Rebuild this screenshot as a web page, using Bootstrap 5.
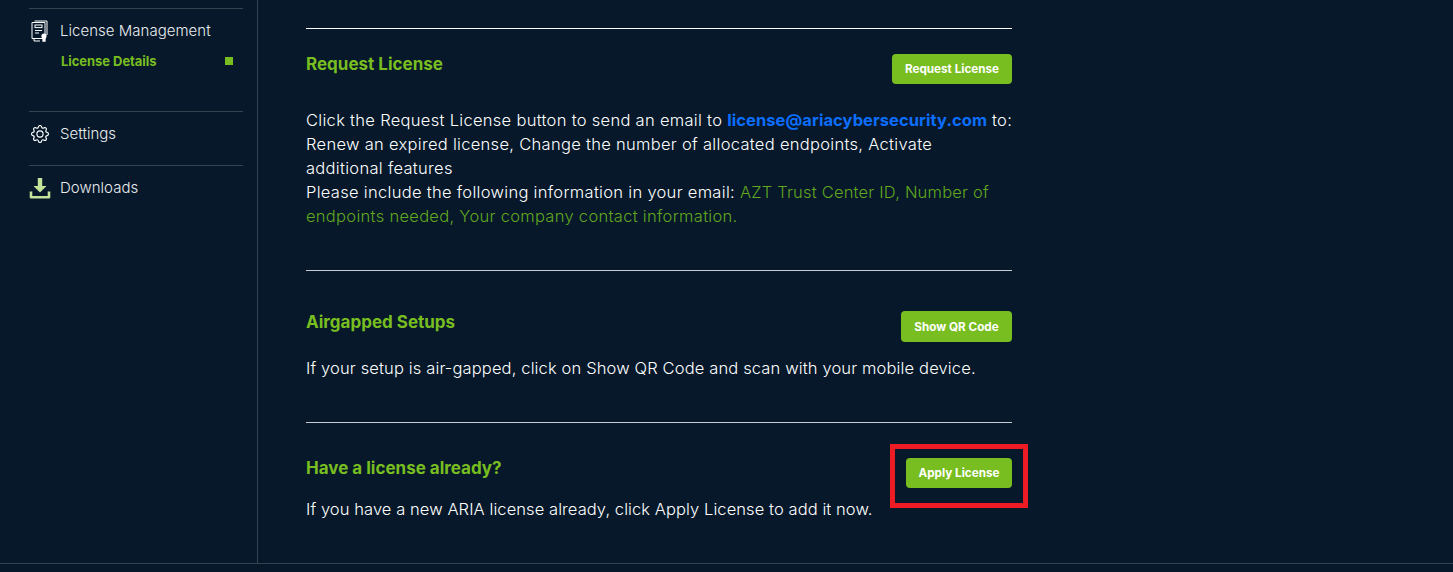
<!DOCTYPE html>
<html lang="en"><head><meta charset="utf-8"><title>License Details</title>
<link rel="stylesheet" href="https://cdn.jsdelivr.net/npm/bootstrap@5.3.0/dist/css/bootstrap.min.css">
<style>
html,body{height:572px;overflow:hidden}
body{background:#06182a;color:#fff;font-family:Inter,"Noto Sans",sans-serif;font-size:16px;line-height:24px}
.shell{height:563px}
.footline{height:1px;background:#35424f}
.side{width:258px;flex:none;border-right:1px solid #35424f;padding:8px 14px 0 29px}
.side-sec{border-top:1px solid #35424f;height:54px;padding-top:10px;color:#e9ecef;font-size:15px;font-weight:300;letter-spacing:.03px}
.side-sec.first{height:103px}
.ico-box{width:31px;height:24px;flex:none}
.ico-a{width:18px;height:23px;margin-left:2px}
.ico-b{width:18px;height:18px;margin-left:2px}
.ico-c{width:22px;height:22px}
.sub-item{color:#78be20;font-size:13px;font-weight:700;line-height:18px;padding:9px 10px 0 32px;letter-spacing:-.05px}
.sq{width:8px;height:8px;background:#78be20}
.main-col{width:706px;margin-left:48px;padding-top:28px}
.rule{border-top:1px solid #c9cdd1}
.rule.top{border-top-color:#fff}
.sec1{height:242px;padding-top:25px}
.sec2{height:152px;padding-top:40px}
.sec3{padding-top:35px}
.head{color:#78be20;font-size:17px;font-weight:700;line-height:20px;margin:0}
.head-b{margin-top:1px}
.gbtn{background:#78be20;border:0;border-radius:4px;color:#fff;font-size:11.7px;font-weight:700;height:30px;padding:0;line-height:30px;white-space:nowrap}
.gbtn:hover{background:#78be20;color:#fff}
.b1{width:120px}.b2{width:111px;height:31px}.b3{width:106px}
.txt{font-size:16.5px;font-weight:300;margin:0;color:#fff;white-space:nowrap}
.txt a{color:#0d6efd;font-weight:700;text-decoration:none;letter-spacing:.07px}
.t1{letter-spacing:.3px}
.t2{letter-spacing:.14px}
.t3{letter-spacing:.08px}
.gr{color:#62a81e;letter-spacing:.2px}
.mark-wrap{position:relative}
.redbox{position:absolute;left:-16px;top:-14px;width:138px;height:64px;border:5px solid #ed1c24;pointer-events:none}
</style></head>
<body>
<div class="shell d-flex">
<nav class="side">
  <div class="side-sec first">
    <div class="d-flex align-items-center">
      <div class="ico-box d-flex align-items-center"><svg class="ico-a" viewBox="0 0 18 23" fill="none" stroke="#fff" stroke-width="1"><path d="M3.5 1h12.5v14"/><path d="M1 2.5h13v16H1z" fill="#06182a"/><rect x="4" y="5" width="7" height="2.6"/><path d="M4 10.5h7M4 13h4M3 18.5v2.5h6"/><circle cx="13" cy="16" r="2.6" fill="#fff" stroke="none"/><path d="M11.9 18v3.6l1.1-.8 1.1.8V18" fill="#fff"/></svg></div>
      <span>License Management</span>
    </div>
    <div class="sub-item d-flex justify-content-between align-items-center"><span>License Details</span><span class="sq"></span></div>
  </div>
  <div class="side-sec">
    <div class="d-flex align-items-center">
      <div class="ico-box d-flex align-items-center"><svg class="ico-b" viewBox="0 0 16 16" fill="#fff"><path d="M8 4.754a3.246 3.246 0 1 0 0 6.492 3.246 3.246 0 0 0 0-6.492zM5.754 8a2.246 2.246 0 1 1 4.492 0 2.246 2.246 0 0 1-4.492 0z"/><path d="M9.796 1.343c-.527-1.79-3.065-1.79-3.592 0l-.094.319a.873.873 0 0 1-1.255.52l-.292-.16c-1.64-.892-3.433.902-2.54 2.541l.159.292a.873.873 0 0 1-.52 1.255l-.319.094c-1.79.527-1.79 3.065 0 3.592l.319.094a.873.873 0 0 1 .52 1.255l-.16.292c-.892 1.64.901 3.434 2.541 2.54l.292-.159a.873.873 0 0 1 1.255.52l.094.319c.527 1.79 3.065 1.79 3.592 0l.094-.319a.873.873 0 0 1 1.255-.52l.292.16c1.64.893 3.434-.902 2.54-2.541l-.159-.292a.873.873 0 0 1 .52-1.255l.319-.094c1.79-.527 1.79-3.065 0-3.592l-.319-.094a.873.873 0 0 1-.52-1.255l.16-.292c.893-1.64-.902-3.433-2.541-2.54l-.292.159a.873.873 0 0 1-1.255-.52l-.094-.319zm-2.633.283c.246-.835 1.428-.835 1.674 0l.094.319a1.873 1.873 0 0 0 2.693 1.115l.291-.16c.764-.415 1.6.42 1.184 1.185l-.159.292a1.873 1.873 0 0 0 1.116 2.692l.318.094c.835.246.835 1.428 0 1.674l-.319.094a1.873 1.873 0 0 0-1.115 2.693l.16.291c.415.764-.42 1.6-1.185 1.184l-.291-.159a1.873 1.873 0 0 0-2.693 1.116l-.094.318c-.246.835-1.428.835-1.674 0l-.094-.319a1.873 1.873 0 0 0-2.692-1.115l-.292.16c-.764.415-1.6-.42-1.184-1.185l.159-.291A1.873 1.873 0 0 0 1.945 8.93l-.319-.094c-.835-.246-.835-1.428 0-1.674l.319-.094A1.873 1.873 0 0 0 3.06 4.377l-.16-.292c-.415-.764.42-1.6 1.185-1.184l.292.159a1.873 1.873 0 0 0 2.692-1.115l.094-.319z"/></svg></div>
      <span>Settings</span>
    </div>
  </div>
  <div class="side-sec">
    <div class="d-flex align-items-center">
      <div class="ico-box d-flex align-items-center"><svg class="ico-c" viewBox="0 0 22 22"><path d="M8.8 1h4.4v8h4.3L11 15.6 4.5 9h4.3z" fill="#c5e29a"/><path d="M2 14.5v5.7h18v-5.7" fill="none" stroke="#c5e29a" stroke-width="2.6" stroke-linejoin="round"/></svg></div>
      <span>Downloads</span>
    </div>
  </div>
</nav>
<main class="main-col">
  <section class="rule top sec1">
    <div class="d-flex justify-content-between align-items-start">
      <h5 class="head">Request License</h5>
      <button class="btn gbtn b1">Request License</button>
    </div>
    <p class="txt t1 mt-4">Click the Request License button to send an email to <a href="#">license@ariacybersecurity.com</a> to:<br>Renew an expired license, Change the number of allocated endpoints, Activate<br>additional features<br>Please include the following information in your email: <span class="gr">AZT Trust Center ID, Number of<br><span class="t1">endpoints needed, Your company contact information.</span></span></p>
  </section>
  <section class="rule sec2">
    <div class="d-flex justify-content-between align-items-start">
      <h5 class="head head-b">Airgapped Setups</h5>
      <button class="btn gbtn b2">Show QR Code</button>
    </div>
    <p class="txt t2" style="margin-top:14px">If your setup is air-gapped, click on Show QR Code and scan with your mobile device.</p>
  </section>
  <section class="rule sec3">
    <div class="d-flex justify-content-between align-items-start">
      <h5 class="head">Have a license already?</h5>
      <div class="mark-wrap"><button class="btn gbtn b3 d-block">Apply License</button><span class="redbox"></span></div>
    </div>
    <p class="txt t3" style="margin-top:9px">If you have a new ARIA license already, click Apply License to add it now.</p>
  </section>
</main>
</div>
<div class="footline"></div>
</body></html>
